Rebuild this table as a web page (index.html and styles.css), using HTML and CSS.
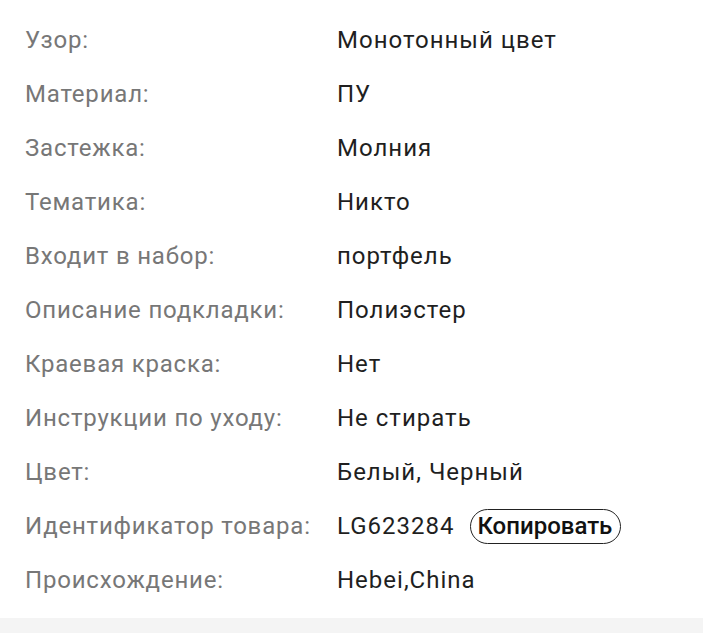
FILE: index.html
```html
<!DOCTYPE html>
<html>
<head>
<meta charset="utf-8">
<link rel="stylesheet" href="styles.css">
</head>
<body>
<div class="specs">
  <div class="row"><div class="label">Узор:</div><div class="value">Монотонный цвет</div></div>
  <div class="row"><div class="label">Материал:</div><div class="value">ПУ</div></div>
  <div class="row"><div class="label">Застежка:</div><div class="value">Молния</div></div>
  <div class="row"><div class="label">Тематика:</div><div class="value">Никто</div></div>
  <div class="row"><div class="label">Входит в набор:</div><div class="value">портфель</div></div>
  <div class="row"><div class="label">Описание подкладки:</div><div class="value">Полиэстер</div></div>
  <div class="row"><div class="label">Краевая краска:</div><div class="value">Нет</div></div>
  <div class="row"><div class="label">Инструкции по уходу:</div><div class="value">Не стирать</div></div>
  <div class="row"><div class="label">Цвет:</div><div class="value">Белый, Черный</div></div>
  <div class="row"><div class="label">Идентификатор товара:</div><div class="value">LG623284<span class="copy">Копировать</span></div></div>
  <div class="row"><div class="label">Происхождение:</div><div class="value">Hebei,China</div></div>
</div>
<div class="strip"></div>
</body>
</html>
```
FILE: styles.css
```css
html, body {
  margin: 0;
  padding: 0;
  background: #fff;
}
body {
  font-family: Roboto, "Noto Sans", sans-serif;
  font-size: 24px;
}
.specs {
  padding: 13px 0 11px 25px;
}
.row {
  display: flex;
  align-items: center;
  height: 54px;
}
.label {
  width: 312px;
  color: #777777;
  letter-spacing: 0.8px;
}
.value {
  color: #1f1f1f;
  display: flex;
  align-items: center;
  letter-spacing: 1px;
}
.copy {
  margin-left: 16px;
  border: 1px solid #222;
  border-radius: 18px;
  padding: 0 8px 0 6px;
  height: 33px;
  line-height: 33px;
  font-size: 24px;
  font-weight: 500;
  letter-spacing: 0;
  color: #111;
}
.strip {
  height: 15px;
  background: #f4f4f4;
}
```
